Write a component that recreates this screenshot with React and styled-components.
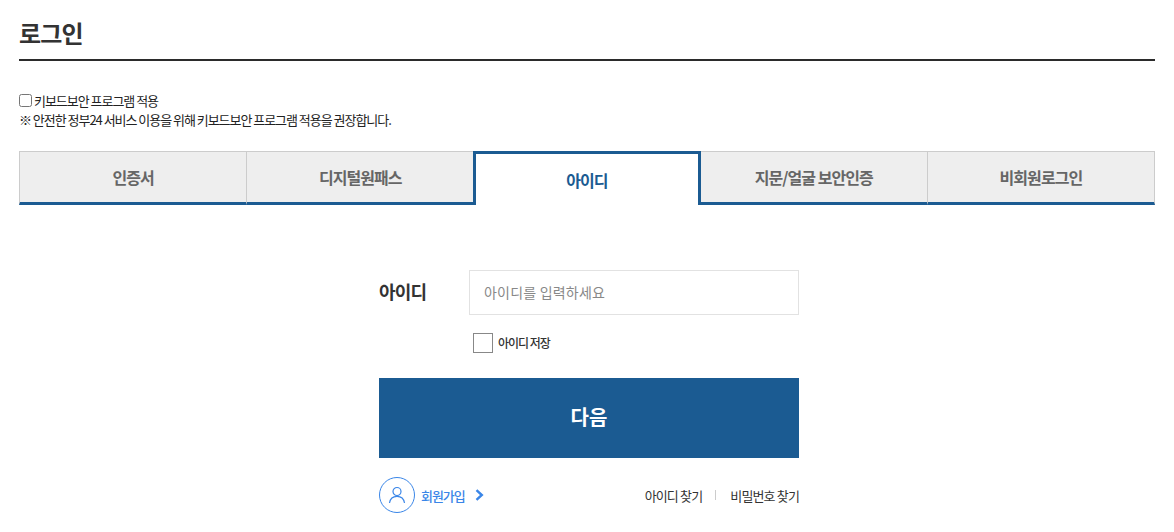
import styled, { createGlobalStyle } from 'styled-components';

const GlobalStyle = createGlobalStyle`
  html, body {
    margin: 0;
    padding: 0;
    background: #fff;
    overflow: hidden;
  }
  body {
    font-family: "Noto Sans CJK KR", "Noto Sans", sans-serif;
    color: #222;
  }
`;

const Page = styled.div`
  width: 1136px;
  height: 532px;
  padding: 0 0 0 19px;
`;

const Title = styled.h1`
  margin: 0;
  border-bottom: 2px solid #2b2b2b;
  padding-top: 15px;
  height: 44px;
  font-size: 24px;
  line-height: 36px;
  font-weight: 700;
  letter-spacing: -0.8px;
  color: #333;
`;

const Notice = styled.div`
  margin-top: 30px;
  font-size: 13px;
  line-height: 19px;
  letter-spacing: -1.03px;
  color: #222;
`;

const NoticeRow = styled.label`
  display: flex;
  align-items: center;
  gap: 2px;
`;

const SmallCheck = styled.input.attrs({ type: 'checkbox' })`
  width: 13px;
  height: 13px;
  margin: 0;
`;

const Tabs = styled.div`
  display: grid;
  grid-template-columns: repeat(5, 1fr);
  margin-top: 22px;
  height: 54px;
`;

const Tab = styled.div`
  display: flex;
  align-items: center;
  justify-content: center;
  box-sizing: border-box;
  font-size: 16px;
  font-weight: 700;
  letter-spacing: -0.95px;
  color: ${(p) => (p.$active ? '#1b5b92' : '#666')};
  background: ${(p) => (p.$active ? '#fff' : '#eee')};
  border: ${(p) => (p.$active ? '3px solid #1b5b92' : '1px solid #ccc')};
  border-bottom: ${(p) => (p.$active ? '0' : '3px solid #1b5b92')};
  border-left: ${(p) => (p.$noLeft ? '0' : '')};
  border-right: ${(p) => (p.$noRight ? '0' : '')};
`;

const Form = styled.div`
  width: 420px;
  margin: 65px 0 0 360px;
`;

const IdRow = styled.div`
  display: flex;
  align-items: center;
`;

const IdLabel = styled.label`
  width: 90px;
  padding-bottom: 3px;
  font-size: 18px;
  font-weight: 700;
  letter-spacing: -0.8px;
  color: #333;
`;

const IdInput = styled.input`
  box-sizing: border-box;
  width: 330px;
  height: 45px;
  border: 1px solid #e2e2e2;
  padding: 0 14px 2px;
  outline: 0;
  font-family: inherit;
  font-size: 14px;
  letter-spacing: 0.2px;
  &::placeholder {
    color: #888;
    opacity: 1;
  }
`;

const SaveRow = styled.div`
  display: flex;
  align-items: center;
  gap: 5px;
  margin: 18px 0 0 94px;
  height: 20px;
`;

const SaveLabel = styled.label`
  padding-bottom: 2px;
  font-size: 12px;
  font-weight: 500;
  letter-spacing: -1px;
  color: #333;
`;

const SaveBox = styled.span`
  box-sizing: border-box;
  width: 20px;
  height: 20px;
  border: 1px solid #888;
  background: #fff;
`;

const NextButton = styled.button`
  display: block;
  width: 420px;
  height: 80px;
  margin-top: 25px;
  padding: 0 0 3px;
  border: 0;
  background: #1b5b92;
  color: #fff;
  font-family: inherit;
  font-size: 20px;
  font-weight: 700;
`;

const Links = styled.div`
  display: flex;
  align-items: center;
  justify-content: space-between;
  margin-top: 19px;
`;

const JoinLink = styled.a`
  display: flex;
  align-items: center;
  color: #3a86e8;
  font-size: 13px;
  font-weight: 500;
  letter-spacing: -1.05px;
`;

const UserCircle = styled.span`
  display: flex;
  align-items: center;
  justify-content: center;
  box-sizing: border-box;
  width: 36px;
  height: 36px;
  margin-right: 6px;
  border: 1px solid #3a86e8;
  border-radius: 50%;
`;

const Chevron = styled.svg`
  margin-left: 10px;
`;

const FindLinks = styled.div`
  display: flex;
  align-items: center;
  font-size: 13px;
  letter-spacing: -0.85px;
  color: #333;
`;

const Divider = styled.span`
  width: 1px;
  height: 10px;
  margin: 0 14px 0 13px;
  background: #ccc;
`;

const tabs = ['인증서', '디지털원패스', '아이디', '지문/얼굴 보안인증', '비회원로그인'];

export default function App() {
  return (
    <>
      <GlobalStyle />
      <Page>
        <Title>로그인</Title>
        <Notice>
          <NoticeRow>
            <SmallCheck />
            키보드보안 프로그램 적용
          </NoticeRow>
          <div>※ 안전한 정부24 서비스 이용을 위해 키보드보안 프로그램 적용을 권장합니다.</div>
        </Notice>
        <Tabs>
          {tabs.map((t, i) => (
            <Tab key={t} $active={i === 2} $noRight={i === 0 || i === 1} $noLeft={i === 3 || i === 4}>
              {t}
            </Tab>
          ))}
        </Tabs>
        <Form>
          <IdRow>
            <IdLabel>아이디</IdLabel>
            <IdInput placeholder="아이디를 입력하세요" />
          </IdRow>
          <SaveRow>
            <SaveBox />
            <SaveLabel>아이디 저장</SaveLabel>
          </SaveRow>
          <NextButton>다음</NextButton>
          <Links>
            <JoinLink>
              <UserCircle>
                <svg width="18" height="18" viewBox="0 0 18 18" fill="none" stroke="#3a86e8" strokeWidth="1.2">
                  <circle cx="9" cy="5.5" r="4" />
                  <path d="M1.5 17c.6-4 3.6-6.6 7.5-6.6s6.9 2.6 7.5 6.6" />
                </svg>
              </UserCircle>
              회원가입
              <Chevron width="9" height="12" viewBox="0 0 9 12" fill="none" stroke="#3a86e8" strokeWidth="2.4">
                <path d="M1.5 1.2 6.8 6l-5.3 4.8" />
              </Chevron>
            </JoinLink>
            <FindLinks>
              아이디 찾기
              <Divider />
              비밀번호 찾기
            </FindLinks>
          </Links>
        </Form>
      </Page>
    </>
  );
}
